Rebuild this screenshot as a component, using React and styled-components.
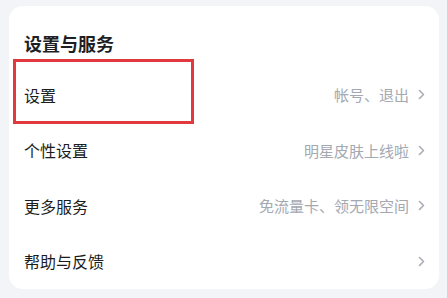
import React from "react";
import styled, { createGlobalStyle } from "styled-components";

const GlobalStyle = createGlobalStyle`
  body {
    margin: 0;
    background: #f3f4f7;
    font-family: "Noto Sans CJK SC", "Noto Sans", sans-serif;
  }
`;

const items = [
  { label: "设置", hint: "帐号、退出", marked: true },
  { label: "个性设置", hint: "明星皮肤上线啦" },
  { label: "更多服务", hint: "免流量卡、领无限空间" },
  { label: "帮助与反馈", hint: "" },
];

const Chevron = () => (
  <svg width="7" height="11" viewBox="0 0 7 11">
    <polyline
      points="1.5,1.5 5.5,5.5 1.5,9.5"
      fill="none"
      stroke="#a9acb4"
      strokeWidth="1.6"
      strokeLinecap="round"
      strokeLinejoin="round"
    />
  </svg>
);

const App = () => {
  return (
    <>
      <GlobalStyle />
      <StPage>
        <StCard>
          <StTitle>设置与服务</StTitle>
          {items.map((item) => (
            <StRow key={item.label}>
              {item.marked && <StMark />}
              <StLabel>{item.label}</StLabel>
              <StRight>
                {item.hint && <StHint>{item.hint}</StHint>}
                <Chevron />
              </StRight>
            </StRow>
          ))}
        </StCard>
      </StPage>
    </>
  );
};

const StPage = styled.div`
  width: 447px;
  height: 298px;
  padding: 6px 8px 0 9px;
  box-sizing: border-box;
`;

const StCard = styled.div`
  height: 283px;
  background: #ffffff;
  border-radius: 14px;
  padding-top: 25px;
  box-sizing: border-box;
`;

const StTitle = styled.div`
  padding: 0 15px;
  height: 24px;
  line-height: 24px;
  font-size: 18px;
  font-weight: 700;
  color: #1d1f24;
  margin-bottom: 12px;
`;

const StRow = styled.div`
  position: relative;
  display: flex;
  align-items: center;
  justify-content: space-between;
  height: 55.5px;
  padding: 0 14px 0 15px;
`;

const StMark = styled.div`
  position: absolute;
  top: -8px;
  left: 4px;
  width: 181px;
  height: 65px;
  border: 3px solid #e0393e;
  box-sizing: border-box;
`;

const StLabel = styled.span`
  font-size: 16px;
  color: #1b1d21;
`;

const StRight = styled.div`
  display: flex;
  align-items: center;
  gap: 9px;
`;

const StHint = styled.span`
  font-size: 15px;
  color: #a4a8b1;
`;

export default App;
